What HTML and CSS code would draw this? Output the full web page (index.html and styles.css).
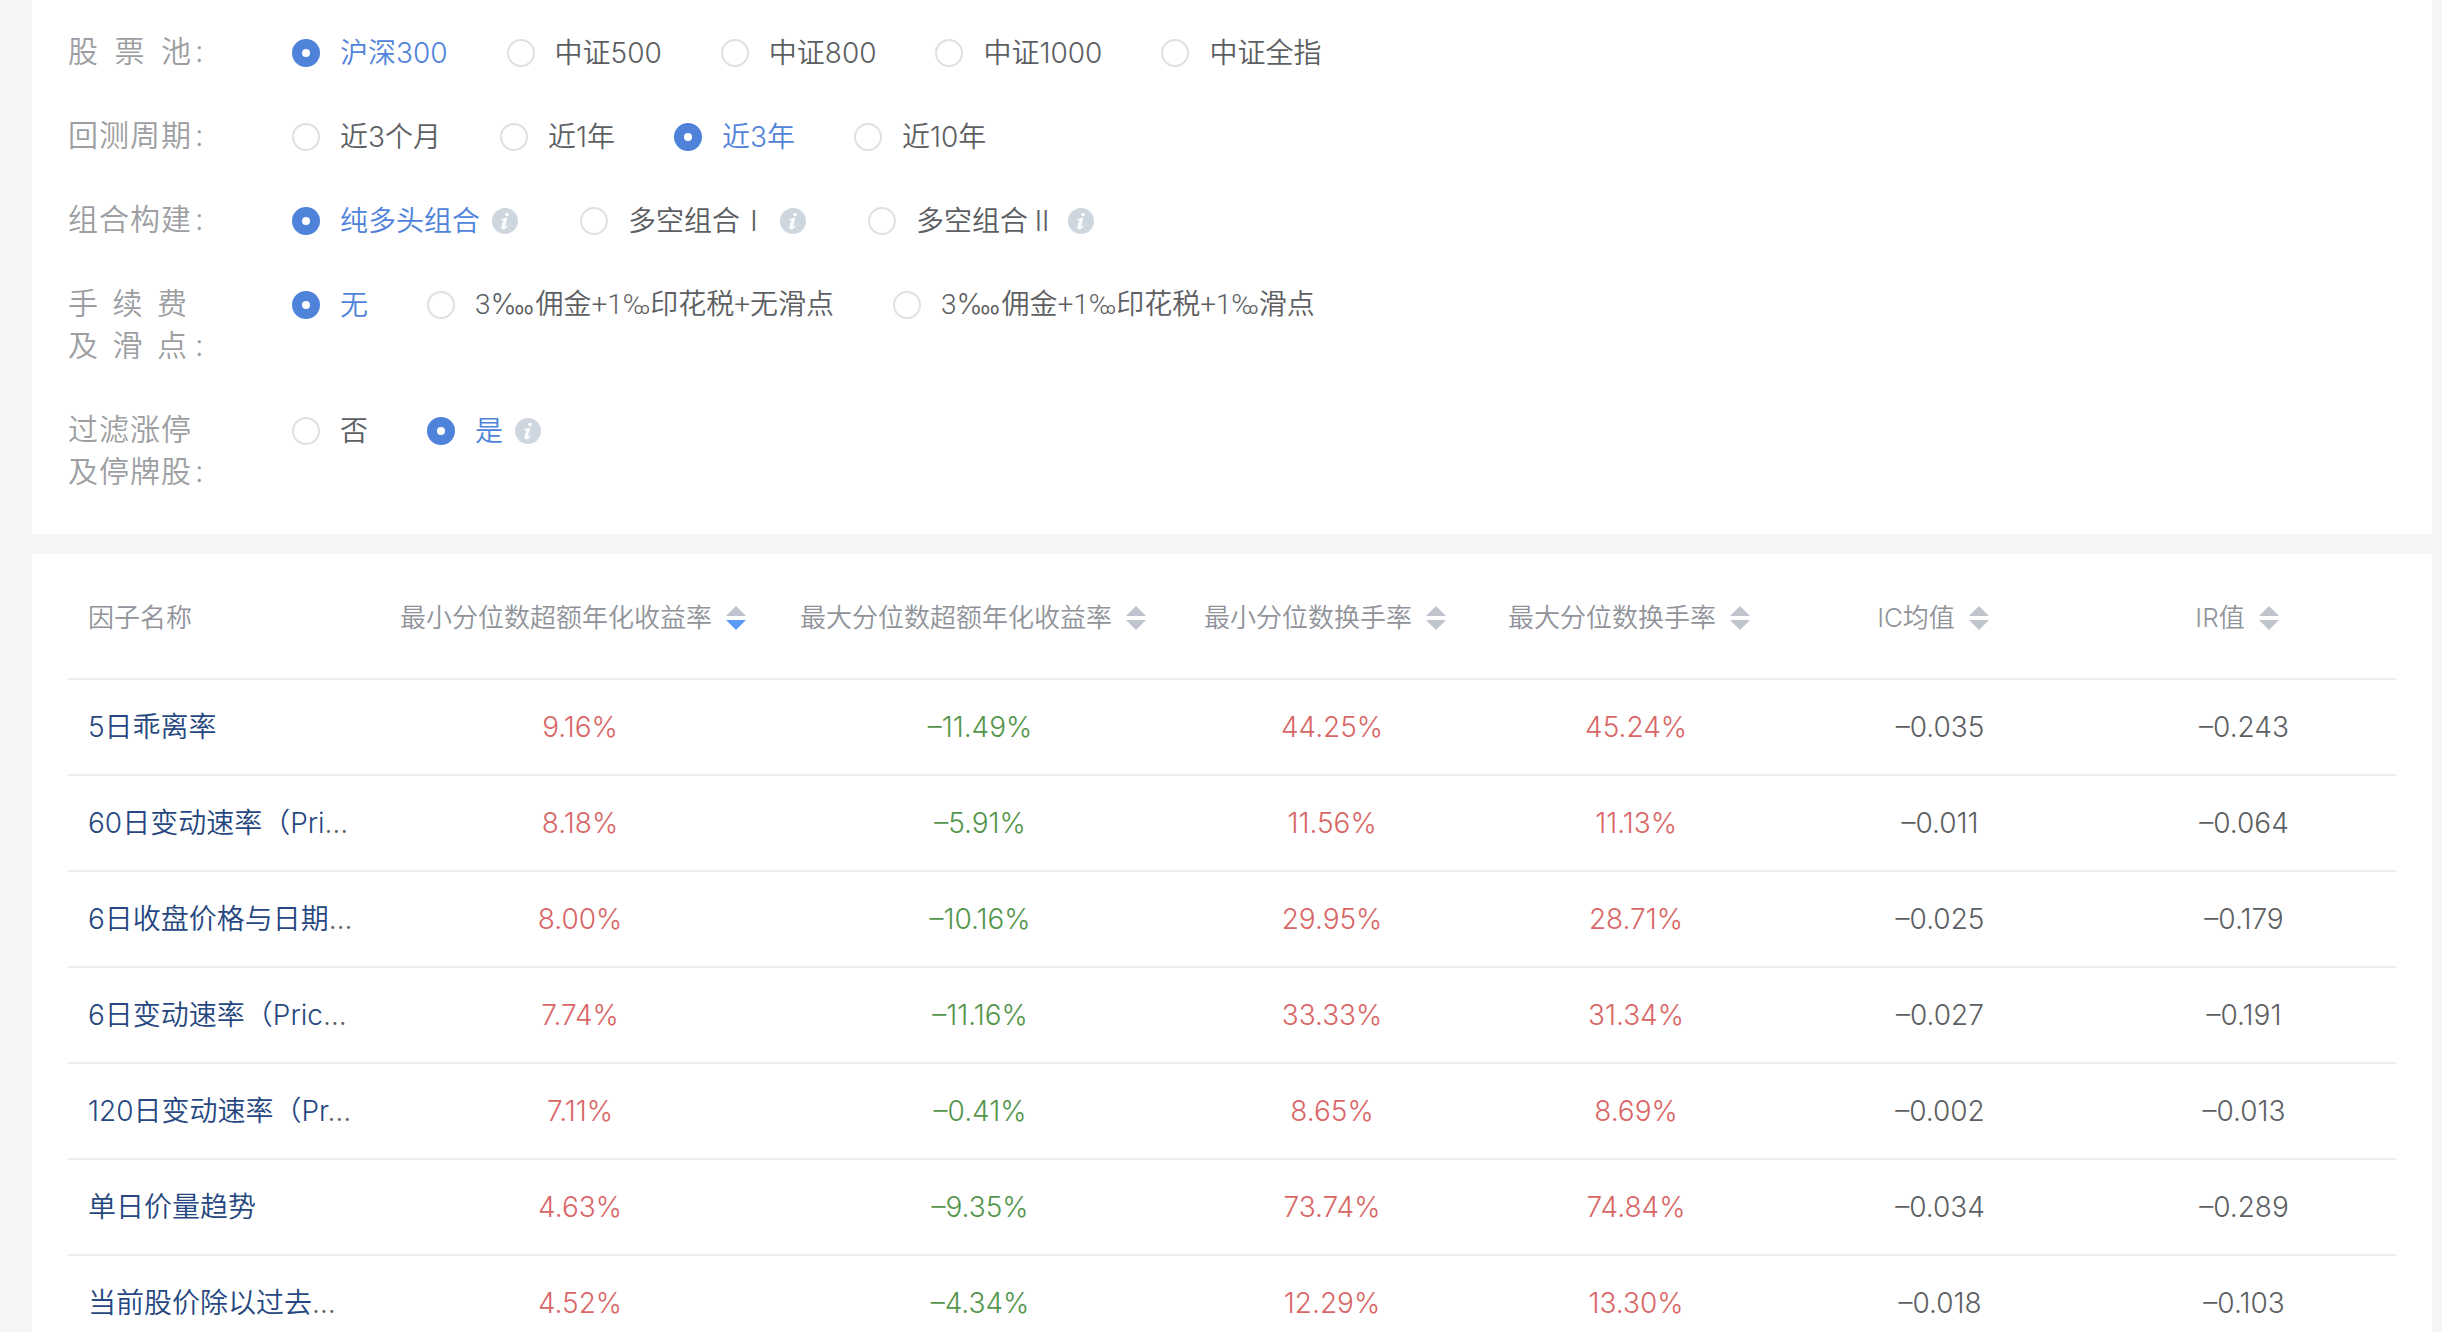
FILE: index.html
```html
<!DOCTYPE html>
<html lang="zh-CN">
<head>
<meta charset="utf-8">
<title>因子列表</title>
<link rel="stylesheet" href="styles.css">
</head>
<body>
<svg class="sprite" aria-hidden="true">
  <symbol id="info" viewBox="0 0 26 26">
    <circle cx="13" cy="13" r="13" fill="#ced6e0"/>
    <circle cx="15" cy="6.600" r="1.800" fill="#fff"/>
    <path d="M9.6 11.2c1.600-.1 3.100-.5 4.700-1.100l.6.3-2.300 8.300c-.1.500.1.700.4.600.600-.2 1.200-.9 1.700-1.600l.6.500c-1.100 1.800-2.500 2.900-4 2.900-1.300 0-1.900-.9-1.500-2.300l1.600-5.700c.2-.7 0-1-.6-1l-1.300-.1z" fill="#fff" stroke="#fff" stroke-width=".5"/>
  </symbol>
  <symbol id="sort" viewBox="0 0 20 24">
    <path class="up" d="M10 0 20 10H0z"/>
    <path class="down" d="M10 24 0 14H20z"/>
  </symbol>
</svg>
<main class="page">
  <form class="card filters">
    <div class="row" role="radiogroup" aria-labelledby="l1">
      <div class="label" id="l1"><span class="chars">股票池</span><span class="colon">:</span></div>
      <div class="options">
        <label class="option"><input type="radio" name="pool" checked><span>沪深300</span></label>
        <label class="option"><input type="radio" name="pool"><span>中证500</span></label>
        <label class="option"><input type="radio" name="pool"><span>中证800</span></label>
        <label class="option"><input type="radio" name="pool"><span>中证1000</span></label>
        <label class="option"><input type="radio" name="pool"><span>中证全指</span></label>
      </div>
    </div>
    <div class="row" role="radiogroup" aria-labelledby="l2">
      <div class="label" id="l2"><span class="chars">回测周期</span><span class="colon">:</span></div>
      <div class="options">
        <label class="option"><input type="radio" name="period"><span>近3个月</span></label>
        <label class="option"><input type="radio" name="period"><span>近1年</span></label>
        <label class="option"><input type="radio" name="period" checked><span>近3年</span></label>
        <label class="option"><input type="radio" name="period"><span>近10年</span></label>
      </div>
    </div>
    <div class="row" role="radiogroup" aria-labelledby="l3">
      <div class="label" id="l3"><span class="chars">组合构建</span><span class="colon">:</span></div>
      <div class="options">
        <label class="option"><input type="radio" name="build" checked><span>纯多头组合</span><svg class="info"><use href="#info"/></svg></label>
        <label class="option"><input type="radio" name="build"><span>多空组合<span class="numeral">I</span></span><svg class="info"><use href="#info"/></svg></label>
        <label class="option"><input type="radio" name="build"><span>多空组合<span class="numeral">II</span></span><svg class="info"><use href="#info"/></svg></label>
      </div>
    </div>
    <div class="row" role="radiogroup" aria-labelledby="l4">
      <div class="label" id="l4"><span class="chars chars-narrow">手续费</span><span class="chars chars-narrow">及滑点</span><span class="colon">:</span></div>
      <div class="options">
        <label class="option"><input type="radio" name="fee" checked><span>无</span></label>
        <label class="option"><input type="radio" name="fee"><span class="rates">3‱佣金+1‰印花税+无滑点</span></label>
        <label class="option"><input type="radio" name="fee"><span class="rates">3‱佣金+1‰印花税+1‰滑点</span></label>
      </div>
    </div>
    <div class="row" role="radiogroup" aria-labelledby="l5">
      <div class="label" id="l5"><span class="chars">过滤涨停</span><span class="chars">及停牌股</span><span class="colon">:</span></div>
      <div class="options">
        <label class="option"><input type="radio" name="filter"><span>否</span></label>
        <label class="option"><input type="radio" name="filter" checked><span>是</span><svg class="info"><use href="#info"/></svg></label>
      </div>
    </div>
  </form>

  <section class="card list">
    <table>
      <colgroup><col class="c-name"><col class="c-return"><col class="c-return"><col><col><col><col></colgroup>
      <thead>
        <tr>
          <th class="name">因子名称</th>
          <th><button type="button" class="sort desc">最小分位数超额年化收益率<svg><use href="#sort"/></svg></button></th>
          <th><button type="button" class="sort">最大分位数超额年化收益率<svg><use href="#sort"/></svg></button></th>
          <th><button type="button" class="sort">最小分位数换手率<svg><use href="#sort"/></svg></button></th>
          <th><button type="button" class="sort">最大分位数换手率<svg><use href="#sort"/></svg></button></th>
          <th><button type="button" class="sort">IC均值<svg><use href="#sort"/></svg></button></th>
          <th><button type="button" class="sort">IR值<svg><use href="#sort"/></svg></button></th>
        </tr>
      </thead>
      <tbody>
        <tr><td class="name"><a href="#">5日乖离率</a></td><td class="pos">9.16%</td><td class="neg">–11.49%</td><td class="pos">44.25%</td><td class="pos">45.24%</td><td>–0.035</td><td>–0.243</td></tr>
        <tr><td class="name"><a href="#">60日变动速率（Pri</a>…</td><td class="pos">8.18%</td><td class="neg">–5.91%</td><td class="pos">11.56%</td><td class="pos">11.13%</td><td>–0.011</td><td>–0.064</td></tr>
        <tr><td class="name"><a href="#">6日收盘价格与日期</a>…</td><td class="pos">8.00%</td><td class="neg">–10.16%</td><td class="pos">29.95%</td><td class="pos">28.71%</td><td>–0.025</td><td>–0.179</td></tr>
        <tr><td class="name"><a href="#">6日变动速率（Pric</a>…</td><td class="pos">7.74%</td><td class="neg">–11.16%</td><td class="pos">33.33%</td><td class="pos">31.34%</td><td>–0.027</td><td>–0.191</td></tr>
        <tr><td class="name"><a href="#">120日变动速率（Pr</a>…</td><td class="pos">7.11%</td><td class="neg">–0.41%</td><td class="pos">8.65%</td><td class="pos">8.69%</td><td>–0.002</td><td>–0.013</td></tr>
        <tr><td class="name"><a href="#">单日价量趋势</a></td><td class="pos">4.63%</td><td class="neg">–9.35%</td><td class="pos">73.74%</td><td class="pos">74.84%</td><td>–0.034</td><td>–0.289</td></tr>
        <tr><td class="name"><a href="#">当前股价除以过去</a>…</td><td class="pos">4.52%</td><td class="neg">–4.34%</td><td class="pos">12.29%</td><td class="pos">13.30%</td><td>–0.018</td><td>–0.103</td></tr>
      </tbody>
    </table>
  </section>
</main>
</body>
</html>
```
FILE: styles.css
```css
* {
  box-sizing: border-box;
}

body {
  margin: 0;
  height: 100vh;
  overflow: hidden;
  background: #f6f6f6;
  color: #5c5e62;
  font-family: Inter, "Noto Sans CJK SC", sans-serif;
  font-size: 28px;
  font-weight: 350;
  line-height: 42px;
}

.sprite {
  display: none;
}

.page {
  display: flex;
  flex-direction: column;
  gap: 20px;
  padding: 0 10px 0 32px;
}

.card {
  background: #fff;
  padding: 0 36px;
}

/* Filters */

.filters {
  display: flex;
  flex-direction: column;
  gap: 42px;
  padding-top: 32px;
  padding-bottom: 40px;
}

.row {
  display: flex;
  align-items: flex-start;
}

.label {
  display: grid;
  grid-template-columns: 123px auto;
  justify-content: start;
  align-items: end;
  column-gap: 4px;
  flex: 0 0 224px;
  margin: -2px 0 2px;
  color: #9c9ea2;
  font-size: 30px;
}

.chars {
  grid-column: 1;
  text-align: justify;
  text-align-last: justify;
}

.chars-narrow {
  width: 119px;
}

.colon {
  grid-column: 2;
}

.options {
  display: flex;
  flex-wrap: wrap;
  gap: 59px;
}

.option {
  display: flex;
  align-items: center;
  cursor: pointer;
}

.option input {
  appearance: none;
  flex: none;
  width: 28px;
  height: 28px;
  margin: 0 20px 0 0;
  border: 2px solid #dfe0e6;
  border-radius: 50%;
  background: #fff;
}

.option input:checked {
  border: 10px solid #4f83da;
}

.option input:checked + span {
  color: #4f83da;
}

.rates {
  font-family: Roboto, Inter, "Noto Sans CJK SC", sans-serif;
}

.numeral {
  display: inline-block;
  width: 28px;
  text-align: center;
}

.info {
  width: 26px;
  height: 26px;
  margin: 0 3px 0 12px;
}

/* Factor table */

table {
  width: 100%;
  table-layout: fixed;
  border-collapse: separate;
  border-spacing: 0;
}

.c-name {
  width: 312px;
}

.c-return {
  width: 400px;
}

th,
td {
  height: 96px;
  padding: 0;
  border-bottom: 2px solid #ecedf2;
  text-align: center;
  font-weight: inherit;
  white-space: nowrap;
}

th {
  height: 126px;
  padding-top: 4px;
  color: #909399;
  font-size: 26px;
}

.name {
  padding-left: 20px;
  text-align: left;
}

.name a {
  color: #26477f;
  text-decoration: none;
}

.pos {
  color: #d96666;
}

.neg {
  color: #53954b;
}

.sort {
  display: inline-flex;
  align-items: center;
  padding: 0;
  border: 0;
  background: none;
  color: inherit;
  font: inherit;
  cursor: pointer;
}

.sort svg {
  width: 20px;
  height: 24px;
  margin: 0 14px;
  fill: #c0c4cc;
}

.desc svg {
  --down: #5a9cf8;
}

.down {
  fill: var(--down, #c0c4cc);
}
```
